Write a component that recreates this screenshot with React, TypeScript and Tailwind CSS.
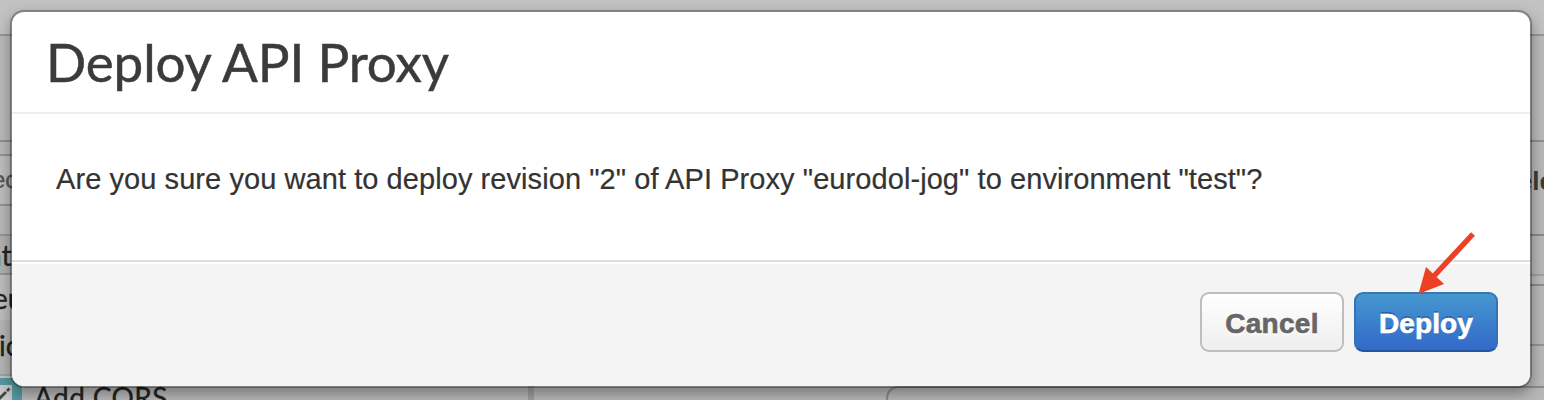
function LeftPane() {
  return (
    <div className="flex w-[528px] shrink-0 flex-col font-['Lato',sans-serif] text-[28px] whitespace-nowrap text-[#222]">
      <div className="h-[12px] shrink-0" />
      <div className="-ml-[12px] flex h-[52px] shrink-0 items-center rounded-md border-2 border-[#8d9397] bg-[#bebebe] font-['Liberation_Sans',sans-serif] text-[24px] text-[#555]">
        <span className="ml-[2px] [-webkit-text-stroke:0.4px_#555]">ect</span>
      </div>
      <div className="h-[28px] shrink-0" />
      <div className="flex h-[41px] shrink-0 items-center border-y-2 border-[#979797] bg-[#b1b1b1]">
        <span className="-ml-[14px] [-webkit-text-stroke:0.3px_#222]">nts</span>
      </div>
      <div className="flex h-[45px] shrink-0 items-center bg-[#bebebe]">
        <span className="-ml-[7px] [-webkit-text-stroke:0.3px_#222]">eurodol</span>
      </div>
      <div className="flex h-[54px] shrink-0 items-center bg-[#b5b5b5]">
        <span className="-mt-[4px] -ml-[1px] [-webkit-text-stroke:0.3px_#222]">ion</span>
      </div>
      <div className="h-[4px] shrink-0 border-t-2 border-[#a2a2a2] bg-[#c5c5c5]" />
      <div className="flex h-[40px] shrink-0 items-center">
        <div className="h-full w-[22px] bg-[#559aa2] pt-[7px]">
          <div className="h-full w-[12px] bg-[#c7c7c7]">
            <svg width="12" height="24" viewBox="0 0 12 24" fill="none" stroke="#444" strokeWidth="2.8">
              <path d="M-1 14 L6 7 M7 6 L9.5 3.5" />
            </svg>
          </div>
        </div>
        <span className="-mt-[2px] ml-[12px] tracking-[0.4px] [-webkit-text-stroke:0.3px_#222]">Add CORS</span>
      </div>
    </div>
  );
}

function RightPane() {
  return (
    <div className="flex flex-1 flex-col text-[28px]">
      <div className="flex h-[94px] shrink-0 items-start justify-end overflow-hidden border-b-2 border-[#8a8a8a] font-['Liberation_Sans',sans-serif] font-bold text-[#3b3b3b]">
        <span className="mt-[20px] -mr-[33px] text-[26px]">Delete</span>
      </div>
      <div className="h-[40px] shrink-0 border-b-2 border-[#a0a0a0]" />
      <div className="h-[10px] shrink-0 border-b-2 border-[#8d8d8d] bg-[#bcbcbc]" />
      <div className="h-[60px] shrink-0 border-b-2 border-[#939393]" />
      <div className="h-[40px] shrink-0" />
      <div className="ml-[352px] h-[40px] shrink-0 rounded-tl-xl border-t-2 border-l-2 border-[#8d8d8d]" />
    </div>
  );
}

function DeployDialog() {
  return (
    <div
      role="dialog"
      className="absolute top-[10px] left-[10px] flex h-[378px] w-[1522px] flex-col overflow-hidden rounded-[14px] border-2 border-black/30 bg-white bg-clip-padding shadow-[0_6px_14px_rgba(0,0,0,0.34)]"
    >
      <header className="flex h-[102px] shrink-0 items-center border-b-2 border-[#eee] pl-[34px]">
        <h1 className="font-['Lato',sans-serif] text-[53px] leading-[60px] tracking-[-0.15px] text-[#3b3b3b] [-webkit-text-stroke:0.5px_#3b3b3b]">
          Deploy API Proxy
        </h1>
      </header>
      <div className="h-[146px] shrink-0 pt-[45px] pl-[44px] font-['Liberation_Sans',Arial,sans-serif] text-[29px] leading-[40px] tracking-[0.07px] whitespace-nowrap text-[#333] [-webkit-text-stroke:0.2px_#333]">
        Are you sure you want to deploy revision "2" of API Proxy "eurodol-jog" to environment "test"?
      </div>
      <footer className="flex flex-1 justify-end gap-[10px] border-t-2 border-[#ddd] bg-[#f4f4f4] pt-[30px] pr-[32px] font-['Liberation_Sans',Arial,sans-serif] text-[28px] font-bold shadow-[inset_0_2px_0_#fff]">
        <button className="h-[60px] w-[144px] rounded-[9px] border-2 border-[#b9bfc3] bg-linear-to-b from-white to-[#eeeeee] pt-[4px] tracking-[0.3px] text-[#666] [-webkit-text-stroke:0.6px_#666] [text-shadow:0_2px_2px_#fff]">
          Cancel
        </button>
        <button className="h-[60px] w-[144px] rounded-[9px] border-2 border-x-[#3273b7] border-t-[#3678b4] border-b-[#28559f] bg-linear-to-b from-[#4697cf] to-[#3369c9] pt-[4px] tracking-[0.1px] text-white [-webkit-text-stroke:0.6px_#fff] [text-shadow:0_-2px_0_rgba(0,0,0,0.25)]">
          Deploy
        </button>
      </footer>
    </div>
  );
}

export default function App() {
  return (
    <main className="relative flex h-[400px] w-[1544px] flex-col overflow-hidden bg-[#b8b8b8]">
      <div className="h-[36px] shrink-0 border-b-2 border-[#979797] bg-[#c2c2c2]" />
      <div className="h-[106px] shrink-0 border-b-2 border-[#8f8f8f] bg-[#bababa]" />
      <div className="flex min-h-0 flex-1 overflow-hidden">
        <LeftPane />
        <div className="mt-[244px] w-[6px] shrink-0 bg-[#a0a0a0]" />
        <RightPane />
      </div>
      <DeployDialog />
      <svg className="pointer-events-none absolute top-[228px] left-[1412px]" width="70" height="72" viewBox="0 0 70 72">
        <path d="M61 6 L21 49" stroke="#ee4023" strokeWidth="5.4" />
        <path d="M6.5 66 L14 39 L32 56 Z" fill="#ee4023" />
      </svg>
    </main>
  );
}
